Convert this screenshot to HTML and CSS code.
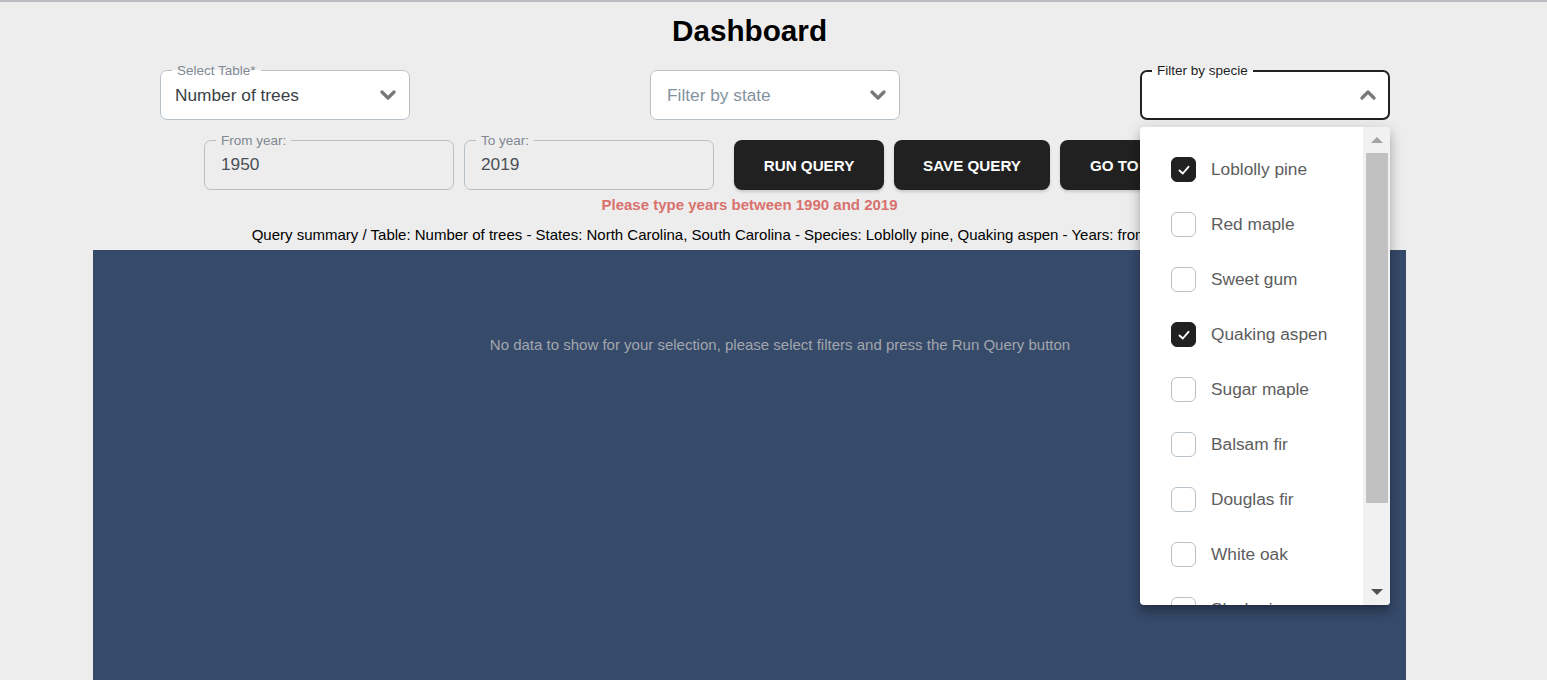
FILE: index.html
```html
<!DOCTYPE html>
<html lang="en">
<head>
<meta charset="utf-8">
<title>Dashboard</title>
<link rel="stylesheet" href="styles.css">
</head>
<body>
<div class="page">
  <h1 class="title">Dashboard</h1>

  <div class="row-selects">
    <div class="field select">
      <fieldset class="outline"><legend>Select Table*</legend></fieldset>
      <span class="value">Number of trees</span>
      <svg class="chev" width="16" height="10" viewBox="0 0 16 10"><polyline points="2,2 8,8 14,2" fill="none" stroke="#777" stroke-width="3.2" stroke-linecap="round" stroke-linejoin="round"/></svg>
    </div>
    <div class="field select">
      <fieldset class="outline nolabel"></fieldset>
      <span class="value placeholder">Filter by state</span>
      <svg class="chev" width="16" height="10" viewBox="0 0 16 10"><polyline points="2,2 8,8 14,2" fill="none" stroke="#777" stroke-width="3.2" stroke-linecap="round" stroke-linejoin="round"/></svg>
    </div>
    <div class="field select focused">
      <fieldset class="outline"><legend>Filter by specie</legend></fieldset>
      <span class="value"></span>
      <svg class="chev" width="16" height="10" viewBox="0 0 16 10"><polyline points="2,8 8,2 14,8" fill="none" stroke="#777" stroke-width="3.2" stroke-linecap="round" stroke-linejoin="round"/></svg>

      <div class="dropdown">
        <ul class="options">
          <li class="option"><span class="cb checked"><svg width="14" height="14" viewBox="0 0 14 14"><polyline points="2.5,7.5 5.8,10.5 11.5,3.8" fill="none" stroke="#fff" stroke-width="1.9" stroke-linecap="round" stroke-linejoin="round"/></svg></span>Loblolly pine</li>
          <li class="option"><span class="cb"></span>Red maple</li>
          <li class="option"><span class="cb"></span>Sweet gum</li>
          <li class="option"><span class="cb checked"><svg width="14" height="14" viewBox="0 0 14 14"><polyline points="2.5,7.5 5.8,10.5 11.5,3.8" fill="none" stroke="#fff" stroke-width="1.9" stroke-linecap="round" stroke-linejoin="round"/></svg></span>Quaking aspen</li>
          <li class="option"><span class="cb"></span>Sugar maple</li>
          <li class="option"><span class="cb"></span>Balsam fir</li>
          <li class="option"><span class="cb"></span>Douglas fir</li>
          <li class="option"><span class="cb"></span>White oak</li>
          <li class="option"><span class="cb"></span>Slash pine</li>
        </ul>
        <div class="scrollbar">
          <div class="arrow up"></div>
          <div class="thumb"></div>
          <div class="track-rest"></div>
          <div class="arrow down"></div>
        </div>
      </div>
    </div>
  </div>

  <div class="row-query">
    <div class="field text">
      <fieldset class="outline"><legend>From year:</legend></fieldset>
      <span class="value">1950</span>
    </div>
    <div class="field text">
      <fieldset class="outline"><legend>To year:</legend></fieldset>
      <span class="value">2019</span>
    </div>
    <button class="btn btn-run">RUN QUERY</button>
    <button class="btn btn-save">SAVE QUERY</button>
    <button class="btn btn-go">GO TO CHARTS</button>
  </div>

  <p class="error">Please type years between 1990 and 2019</p>
  <p class="summary">Query summary / Table: Number of trees - States: North Carolina, South Carolina - Species: Loblolly pine, Quaking aspen - Years: from 1950 to 2019</p>

  <section class="panel">
    <p class="nodata">No data to show for your selection, please select filters and press the Run Query button</p>
  </section>
</div>
</body>
</html>
```

FILE: styles.css
```css
* { box-sizing: border-box; }

html, body {
  margin: 0;
  padding: 0;
  height: 680px;
  overflow: hidden;
}

body {
  background: #ededed;
  border-top: 2px solid #bcbbc1;
  font-family: "Liberation Sans", Arial, sans-serif;
  color: #000;
}

.page {
  margin-left: 93px;
  width: 1313px;
}

.title {
  margin: 11px 0 0;
  font-size: 29.7px;
  line-height: 36px;
  font-weight: bold;
  text-align: center;
}

.row-selects {
  margin-top: 21px;
  padding-left: 67px;
  display: flex;
  gap: 240px;
}

.row-query {
  margin-top: 20px;
  padding-left: 111px;
  display: flex;
  align-items: center;
}

.field {
  position: relative;
  width: 250px;
  height: 50px;
  border-radius: 7px;
  display: flex;
  align-items: center;
  padding: 0 14px 0 15px;
}

.field.select { background: #fff; }
.field.text { background: transparent; padding-left: 17px; padding-bottom: 2px; }
.field.text + .field.text { margin-left: 10px; }

.outline {
  position: absolute;
  top: -5px;
  left: 0;
  right: 0;
  bottom: 0;
  margin: 0;
  padding: 0 11px;
  border: 1px solid #b7bfc7;
  border-radius: 7px;
  pointer-events: none;
}

.outline legend {
  font-size: 13.5px;
  line-height: 11px;
  padding: 0 5px;
  color: #7f8893;
}

.outline.nolabel { top: 0; }

.focused .outline {
  border: 2px solid #212121;
  padding: 0 10px;
}
.focused .outline legend { color: #1e1e1e; }

.value {
  flex: 1;
  font-size: 17.3px;
  color: #3a3f45;
}
.field.text .value { color: #4a4f55; }

.value.placeholder { color: #8492a0; padding-left: 2px; }

.chev { flex: none; }

.btn {
  height: 50px;
  border: 0;
  border-radius: 8px;
  background: #212121;
  color: #fff;
  font-family: "Liberation Sans", Arial, sans-serif;
  font-weight: bold;
  font-size: 15.2px;
  box-shadow: 0 2px 3px rgba(0,0,0,0.15);
  padding: 0;
}
.btn-run { width: 150px; margin-left: 20px; }
.btn-save { width: 156px; margin-left: 10px; }
.btn-go { width: 160px; margin-left: 10px; text-align: left; padding-left: 30px; }

.error {
  margin: 5px 0 0;
  line-height: 20px;
  font-size: 15px;
  font-weight: bold;
  color: #d9716d;
  text-align: center;
}

.summary {
  margin: 10px 0 0;
  padding-right: 8px;
  line-height: 20px;
  font-size: 15px;
  text-align: center;
  white-space: nowrap;
}

.panel {
  margin-top: 5px;
  height: 430px;
  background: #364a6a;
  padding: 85px 0 0 61px;
}

.nodata {
  margin: 0;
  line-height: 20px;
  font-size: 15px;
  color: #a2a6ad;
  text-align: center;
}

/* dropdown menu */
.dropdown {
  position: absolute;
  top: 57px;
  left: 0;
  width: 250px;
  height: 478px;
  background: #fff;
  border-radius: 4px;
  box-shadow: 0 5px 5px -3px rgba(0,0,0,0.2), 0 8px 10px 1px rgba(0,0,0,0.14), 0 3px 14px 2px rgba(0,0,0,0.12);
  display: flex;
  overflow: hidden;
  z-index: 10;
}

.options {
  list-style: none;
  margin: 0;
  padding: 15px 0 0;
  flex: 1;
  overflow: hidden;
}

.option {
  height: 55px;
  display: flex;
  align-items: center;
  padding-left: 31px;
  gap: 15px;
  font-size: 17.3px;
  color: #5d5d5d;
}

.cb {
  width: 25px;
  height: 25px;
  border: 1px solid #b9c1c9;
  border-radius: 6px;
  display: flex;
  align-items: center;
  justify-content: center;
  flex: none;
}
.cb.checked {
  background: #212121;
  border-color: #212121;
}

.scrollbar {
  width: 27px;
  flex: none;
  background: #f1f1f1;
  display: flex;
  flex-direction: column;
  align-items: center;
  padding: 0 2px;
}

.arrow {
  width: 0;
  height: 0;
  border-left: 6px solid transparent;
  border-right: 6px solid transparent;
  flex: none;
}
.arrow.up {
  border-bottom: 6px solid #a3a3a3;
  margin: 10px 0 10px;
}
.arrow.down {
  border-top: 6px solid #505050;
  margin: 10px 0 10px;
}

.thumb {
  width: 22px;
  height: 350px;
  background: #c1c1c1;
  flex: none;
}

.track-rest { flex: 1; }
```
